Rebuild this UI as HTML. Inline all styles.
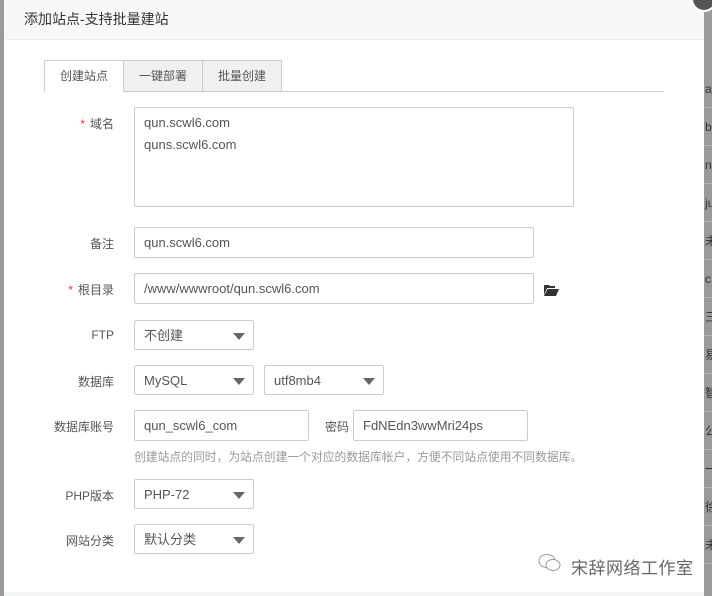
<!DOCTYPE html>
<html><head><meta charset="utf-8"><style>
*{box-sizing:border-box;margin:0;padding:0}
body{width:712px;height:596px;overflow:hidden;background:#9a9a9a;font-family:"Liberation Sans","Noto Sans CJK SC",sans-serif;font-size:12px;color:#555;position:relative}
.strip{position:absolute;left:704px;width:8px;height:38px;border-bottom:1px solid #b5b5b5;font-size:12px;color:#333;line-height:38px;overflow:hidden;text-indent:1px}
.modal{position:absolute;left:4px;top:0;width:700px;height:592px;background:#fff}
.hd{height:40px;background:#f8f8f8;border-bottom:1px solid #eee;padding-left:20px;line-height:38px;font-size:14px;color:#333}
.close{position:absolute;left:691px;top:-14px;width:26px;height:26px;border-radius:50%;background:#555;border:2px solid #fff}
.abs{position:absolute}
.inp{position:absolute;border:1px solid #ccc;border-radius:2px;background:#fff;padding-left:9px;line-height:30px;color:#555;font-size:13px}
.lbl{position:absolute;width:110px;text-align:right;left:0;color:#555}
.sel::after{content:"";position:absolute;right:8px;top:12px;border-left:6px solid transparent;border-right:6px solid transparent;border-top:7px solid #666}
.tab{position:absolute;top:60px;height:32px;border:1px solid #ccc;background:#f0f0f0;line-height:30px;text-align:center;color:#555}
.star{color:#f33;margin-right:5px}
</style></head><body>
<div class="strip" style="top:70px">a</div>
<div class="strip" style="top:108px">b</div>
<div class="strip" style="top:146px">n</div>
<div class="strip" style="top:184px">ju</div>
<div class="strip" style="top:222px">未</div>
<div class="strip" style="top:260px">c</div>
<div class="strip" style="top:298px">三</div>
<div class="strip" style="top:336px">易</div>
<div class="strip" style="top:374px">智</div>
<div class="strip" style="top:412px">公</div>
<div class="strip" style="top:450px">一</div>
<div class="strip" style="top:488px">徐</div>
<div class="strip" style="top:526px">未</div>
<div class="modal">
<div class="hd">添加站点-支持批量建站</div>
<div class="abs" style="left:40px;top:91px;width:620px;height:1px;background:#ccc"></div>
<div class="tab" style="left:40px;width:80px;background:#fff;border-bottom-color:#fff">创建站点</div>
<div class="tab" style="left:119px;width:80px">一键部署</div>
<div class="tab" style="left:198px;width:80px">批量创建</div>

<div class="lbl" style="top:115px"><span class="star">*</span>域名</div>
<div class="inp" style="left:130px;top:107px;width:440px;height:100px;line-height:22px;padding-top:4px">qun.scwl6.com<br>quns.scwl6.com</div>

<div class="lbl" style="top:235px">备注</div>
<div class="inp" style="left:130px;top:227px;width:400px;height:31px">qun.scwl6.com</div>

<div class="lbl" style="top:281px"><span class="star">*</span>根目录</div>
<div class="inp" style="left:130px;top:273px;width:400px;height:31px">/www/wwwroot/qun.scwl6.com</div>
<svg class="abs" style="left:540px;top:284px" width="15" height="12" viewBox="0 0 15 12"><path d="M0 1h5l1 1h5v2H3L0 11z" fill="#333"/><path d="M3.5 5H15l-3 7H0z" fill="#333"/></svg>

<div class="lbl" style="top:328px">FTP</div>
<div class="inp sel" style="left:130px;top:320px;width:120px;height:30px">不创建</div>

<div class="lbl" style="top:373px">数据库</div>
<div class="inp sel" style="left:130px;top:365px;width:120px;height:30px">MySQL</div>
<div class="inp sel" style="left:260px;top:365px;width:120px;height:30px">utf8mb4</div>

<div class="lbl" style="top:418px">数据库账号</div>
<div class="inp" style="left:130px;top:410px;width:175px;height:31px">qun_scwl6_com</div>
<div class="abs" style="left:321px;top:418px">密码</div>
<div class="inp" style="left:349px;top:410px;width:175px;height:31px">FdNEdn3wwMri24ps</div>
<div class="abs" style="left:130px;top:448px;font-size:11.8px;color:#999">创建站点的同时，为站点创建一个对应的数据库帐户，方便不同站点使用不同数据库。</div>

<div class="lbl" style="top:487px">PHP版本</div>
<div class="inp sel" style="left:130px;top:479px;width:120px;height:30px">PHP-72</div>

<div class="lbl" style="top:532px">网站分类</div>
<div class="inp sel" style="left:130px;top:524px;width:120px;height:30px">默认分类</div>

<svg class="abs" style="left:534px;top:553px" width="24" height="20" viewBox="0 0 24 20"><ellipse cx="9" cy="8" rx="8" ry="6.5" fill="none" stroke="#999"/><ellipse cx="15" cy="12" rx="7" ry="5.5" fill="#fff" stroke="#999"/></svg>
<div class="abs" style="left:567px;top:554px;font-size:17px;color:#666;letter-spacing:0.5px">宋辞网络工作室</div>
</div>
<div class="abs" style="left:4px;top:592px;width:700px;height:4px;background:#f4f6f6"></div>
<div class="close"></div>
</body></html>
